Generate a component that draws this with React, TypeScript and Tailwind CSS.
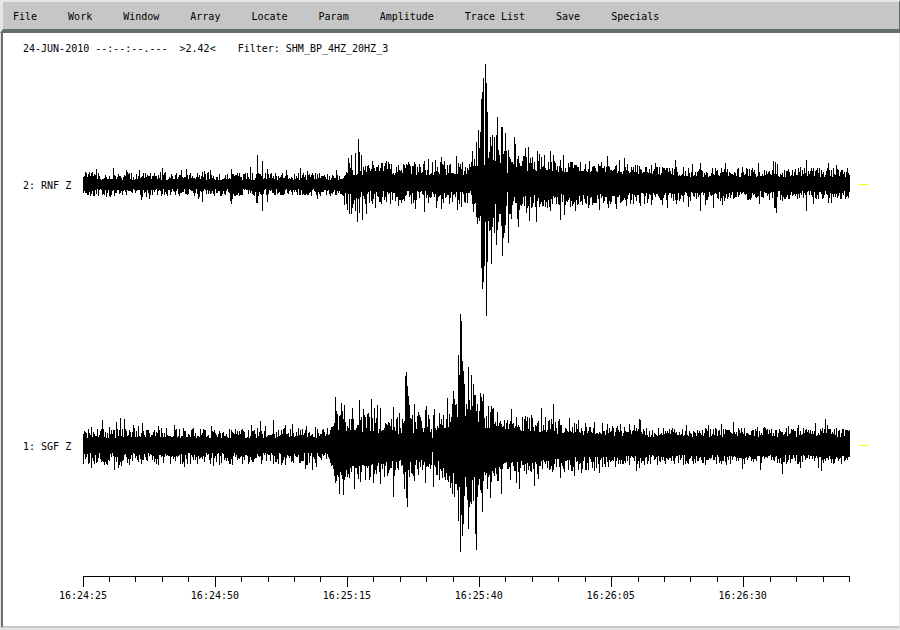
import React from "react";

type Pair = [number, number];
type Band = [number, number, number];

interface Trace {
  label: string;
  centre: number;
  seed: number;
  upBand: Band[];
  downBand: Band[];
  up: Pair[];
  down: Pair[];
}

const START = 83;
const COLUMNS = 767;
const ROW = 261;
const MID = 130;

const MENUS = ["File", "Work", "Window", "Array", "Locate", "Param", "Amplitude", "Trace List", "Save", "Specials"];
const TIMES = ["16:24:25", "16:24:50", "16:25:15", "16:25:40", "16:26:05", "16:26:30"];

const TRACES: Trace[] = [
  {
    label: "2: RNF Z",
    centre: 184,
    seed: 7,
    upBand: [[83, 4, 13], [340, 4, 11], [346, 8, 23], [365, 9, 22], [470, 9, 22], [480, 20, 40], [505, 14, 30], [530, 13, 28], [600, 11, 20], [700, 7, 16], [849, 7, 16]],
    downBand: [[83, 5, 13], [340, 5, 12], [346, 10, 28], [368, 7, 20], [470, 7, 20], [480, 26, 40], [500, 20, 38], [515, 12, 28], [540, 10, 25], [600, 10, 22], [700, 7, 17], [849, 7, 15]],
    up: [
      [96, 169], [113, 168], [126, 170], [139, 170], [162, 168], [181, 170], [186, 169], [204, 171], [210, 170], [231, 169], [250, 167], [257, 155], [262, 161], [267, 169], [286, 170], [300, 168], [307, 171], [336, 170],
      [348, 158], [351, 155], [355, 153], [358, 139], [359, 152], [361, 155], [372, 161], [382, 163], [386, 161], [391, 164], [403, 164], [414, 162], [424, 161], [428, 159], [435, 160], [441, 157], [444, 161], [456, 156], [462, 162],
      [472, 151], [476, 142], [478, 130], [479, 148], [480, 132], [481, 99], [482, 92], [483, 78], [484, 165], [485, 64], [486, 83], [487, 112], [488, 158], [489, 152], [490, 137], [491, 146], [492, 135], [493, 160], [494, 137], [495, 161], [496, 135], [497, 117], [498, 150], [499, 155], [500, 163], [501, 127], [502, 127], [503, 154], [504, 151], [505, 133], [506, 151], [507, 173], [508, 150], [509, 157],
      [514, 137], [515, 144], [518, 156], [525, 148], [528, 147], [532, 157], [537, 151], [539, 154], [544, 155], [550, 151], [553, 155], [563, 155], [571, 162], [580, 162], [589, 161], [601, 162], [607, 156], [619, 160], [624, 158], [627, 164], [637, 165], [651, 165], [655, 163], [675, 160], [692, 164], [700, 163], [712, 168], [725, 163], [742, 167], [758, 163], [773, 161], [775, 162], [777, 164], [795, 169], [800, 167], [806, 160], [813, 168], [819, 168], [828, 163], [836, 165], [847, 168],
    ],
    down: [
      [141, 200], [149, 199], [198, 199], [202, 202], [230, 201], [231, 204], [232, 199], [256, 203], [257, 203], [262, 211], [267, 202], [317, 199],
      [346, 204], [349, 214], [351, 214], [355, 211], [357, 222], [359, 213], [362, 220], [366, 214], [375, 208], [381, 204], [398, 206], [415, 209], [424, 212], [436, 208], [441, 209], [457, 210], [461, 207],
      [473, 212], [476, 217], [477, 224], [479, 221], [480, 216], [481, 268], [482, 289], [483, 282], [484, 266], [485, 222], [486, 316], [487, 262], [488, 221], [489, 231], [490, 230], [491, 264], [492, 227], [493, 218], [494, 233], [495, 204], [496, 245], [497, 230], [498, 222], [499, 214], [500, 214], [501, 226], [502, 256], [503, 238], [504, 233], [505, 225], [506, 206], [507, 192], [508, 243], [509, 214],
      [511, 219], [517, 219], [518, 227], [526, 213], [529, 221], [536, 222], [550, 211], [560, 220], [564, 215], [575, 211], [588, 208], [599, 210], [608, 208], [616, 209], [626, 206], [640, 206], [651, 205], [662, 205], [667, 208], [676, 204], [688, 207], [700, 211], [705, 205], [713, 208], [722, 205], [759, 204], [774, 208], [775, 208], [776, 213], [782, 201], [806, 211], [813, 204], [828, 203], [831, 203],
    ],
  },
  {
    label: "1: SGF Z",
    centre: 445,
    seed: 23,
    upBand: [[83, 7, 17], [330, 7, 17], [336, 14, 36], [400, 11, 30], [450, 12, 33], [490, 17, 40], [510, 14, 30], [560, 11, 25], [640, 8, 17], [849, 8, 17]],
    downBand: [[83, 8, 20], [330, 8, 20], [336, 22, 40], [400, 15, 32], [440, 15, 34], [450, 28, 48], [488, 26, 42], [505, 17, 34], [560, 13, 28], [640, 10, 20], [849, 10, 19]],
    up: [
      [84, 431], [91, 427], [102, 420], [109, 427], [116, 422], [120, 418], [124, 419], [133, 425], [138, 426], [142, 423], [158, 426], [174, 425], [183, 428], [193, 428], [203, 429], [211, 426], [242, 429], [251, 425], [260, 421], [265, 426], [273, 420], [285, 425], [292, 424], [298, 428], [306, 426], [315, 427], [331, 427],
      [335, 397], [337, 414], [339, 416], [341, 403], [344, 405], [352, 408], [359, 400], [363, 409], [371, 399], [374, 408], [377, 405], [380, 408], [393, 407], [399, 413], [405, 376], [406, 372], [407, 386], [408, 396], [409, 405], [410, 418], [414, 404], [418, 412], [425, 410], [426, 406], [432, 438], [434, 409], [439, 413], [447, 398],
      [452, 404], [453, 391], [454, 399], [455, 405], [456, 404], [457, 417], [458, 355], [459, 375], [460, 314], [461, 321], [462, 361], [463, 371], [464, 384], [465, 416], [466, 404], [467, 409], [468, 367], [469, 400], [470, 410], [471, 375], [472, 406], [473, 384], [474, 395], [475, 395], [476, 411], [477, 404], [478, 422], [479, 411], [480, 393], [481, 397], [482, 401], [483, 394], [484, 418],
      [488, 406], [491, 406], [497, 412], [511, 409], [525, 416], [531, 415], [541, 408], [545, 417], [553, 404], [559, 419], [569, 418], [574, 423], [578, 420], [585, 423], [594, 422], [602, 423], [607, 424], [620, 424], [629, 424], [634, 425], [639, 419], [640, 420], [672, 428], [686, 425], [708, 425], [721, 424], [733, 422], [757, 427], [764, 427], [788, 426], [798, 425], [815, 423], [825, 419], [827, 425], [846, 430],
    ],
    down: [
      [91, 468], [101, 462], [107, 465], [114, 470], [118, 468], [121, 466], [129, 465], [154, 462], [170, 464], [184, 467], [213, 466], [252, 462], [261, 464], [281, 465], [299, 463], [305, 469], [312, 470], [316, 467],
      [335, 483], [339, 494], [343, 495], [354, 489], [360, 482], [373, 483], [380, 484], [393, 497], [404, 489], [406, 498], [407, 507], [409, 477], [414, 481], [425, 483], [432, 452], [433, 487], [439, 480], [447, 480],
      [452, 494], [454, 497], [456, 484], [458, 521], [459, 487], [460, 552], [461, 515], [462, 536], [463, 524], [464, 496], [465, 477], [467, 500], [468, 529], [469, 507], [470, 502], [471, 504], [472, 480], [473, 501], [474, 477], [475, 534], [476, 550], [477, 497], [478, 485], [480, 490], [481, 493], [482, 512], [483, 481],
      [487, 489], [490, 498], [501, 494], [510, 480], [516, 483], [519, 489], [534, 486], [538, 479], [560, 478], [574, 476], [581, 473], [585, 470], [594, 471], [599, 473], [608, 467], [636, 471], [639, 468], [685, 464], [705, 465], [721, 464], [742, 469], [760, 470], [782, 474], [800, 468], [818, 468], [821, 471], [833, 464],
    ],
  },
];

/** Small repeatable generator, so that the background noise is stable between renders. */
function makeRandom(seed: number): () => number {
  let state = seed;
  return () => {
    state = (state * 16807) % 2147483647;
    return state / 2147483647;
  };
}

function bandAt(bands: Band[], x: number): Pair {
  for (let i = 1; i < bands.length; i++) {
    const [x1, lo1, hi1] = bands[i];
    if (x <= x1) {
      const [x0, lo0, hi0] = bands[i - 1];
      const t = (x - x0) / (x1 - x0);
      return [lo0 + (lo1 - lo0) * t, hi0 + (hi1 - hi0) * t];
    }
  }
  const last = bands[bands.length - 1];
  return [last[1], last[2]];
}

function tracePath(trace: Trace): string {
  const random = makeRandom(trace.seed * 7919);
  const ups = new Map(trace.up);
  const downs = new Map(trace.down);
  let d = "";
  for (let i = 0; i < COLUMNS; i++) {
    const x = START + i;
    const [upLo, upHi] = bandAt(trace.upBand, x);
    const [downLo, downHi] = bandAt(trace.downBand, x);
    const u = Math.round(upLo + (upHi - upLo) * Math.pow(random(), 1.2));
    const v = Math.round(downLo + (downHi - downLo) * Math.pow(random(), 1.2));
    const upPeak = ups.get(x);
    const downPeak = downs.get(x);
    const top = MID - (upPeak === undefined ? u : trace.centre - upPeak);
    const bottom = MID + (downPeak === undefined ? v : downPeak - trace.centre);
    d += `M${i} ${top}h1V${bottom}h-1z`;
  }
  return d;
}

function TraceRow({ trace }: { trace: Trace }) {
  return (
    <div className="flex h-[261px] items-center">
      <span className="w-[60px] shrink-0 pt-[2px] whitespace-pre">{trace.label}</span>
      <svg
        className="h-[261px] min-w-0 flex-1 overflow-visible"
        viewBox={`0 0 ${COLUMNS} ${ROW}`}
        preserveAspectRatio="none"
        shapeRendering="crispEdges"
        role="img"
        aria-label={trace.label}
      >
        <path d={tracePath(trace)} fill="#000" />
      </svg>
      <div className="w-[49px] shrink-0 pl-[9px]">
        <div className="h-px w-[9px] bg-[#ffff00]" />
      </div>
    </div>
  );
}

function TimeAxis() {
  const ticks = Array.from({ length: 30 }, (_, i) => ({
    x: Math.floor(i * 26.43),
    height: i % 5 === 0 ? 11 : 6,
  }));
  return (
    <div className="mr-[49px] ml-[60px]">
      <svg
        className="block h-[11px] w-full"
        viewBox={`0 0 ${COLUMNS} 11`}
        preserveAspectRatio="none"
        shapeRendering="crispEdges"
        aria-hidden="true"
      >
        <rect x="0" y="0" width={COLUMNS} height="1" />
        {ticks.map((tick) => (
          <rect key={tick.x} x={tick.x} y="0" width="1" height={tick.height} />
        ))}
      </svg>
      <div className="flex pt-px">
        {TIMES.map((time) => (
          <div key={time} className="w-[17.2%] shrink-0">
            <time className="flex w-0 justify-center whitespace-nowrap">{time}</time>
          </div>
        ))}
      </div>
    </div>
  );
}

export default function App() {
  return (
    <div className="flex min-h-screen flex-col overflow-x-hidden bg-white font-['DejaVu_Sans_Mono',monospace] text-[10px] leading-4 text-black">
      <nav className="flex gap-[31px] border-t-2 border-r border-b-4 border-l-3 border-t-[#e6e6e6] border-r-[#666e6a] border-b-[#666e6a] border-l-[#e6e6e6] bg-[#c6c6c6] pt-[7px] pb-[4px] pl-[10px]">
        {MENUS.map((menu) => (
          <button key={menu} type="button" className="whitespace-nowrap">
            {menu}
          </button>
        ))}
      </nav>
      <div className="flex flex-1 flex-col border-l border-l-[#e6e6e6]">
        <main className="flex flex-1 flex-col border-r border-b-2 border-l-2 border-r-[#e6e6e6] border-b-[#c6c6c6] border-l-[#666e6a] pt-2 pl-5">
          <header className="flex h-[13px] items-center pt-[2px] whitespace-pre">
            <span>24-JUN-2010 --:--:--.---  &gt;2.42&lt;</span>
            <span className="ml-[22px]">Filter: SHM_BP_4HZ_20HZ_3</span>
          </header>
          <TraceRow trace={TRACES[0]} />
          <TraceRow trace={TRACES[1]} />
          <TimeAxis />
        </main>
        <div className="h-[2px] bg-[#e6e6e6]" />
      </div>
    </div>
  );
}
